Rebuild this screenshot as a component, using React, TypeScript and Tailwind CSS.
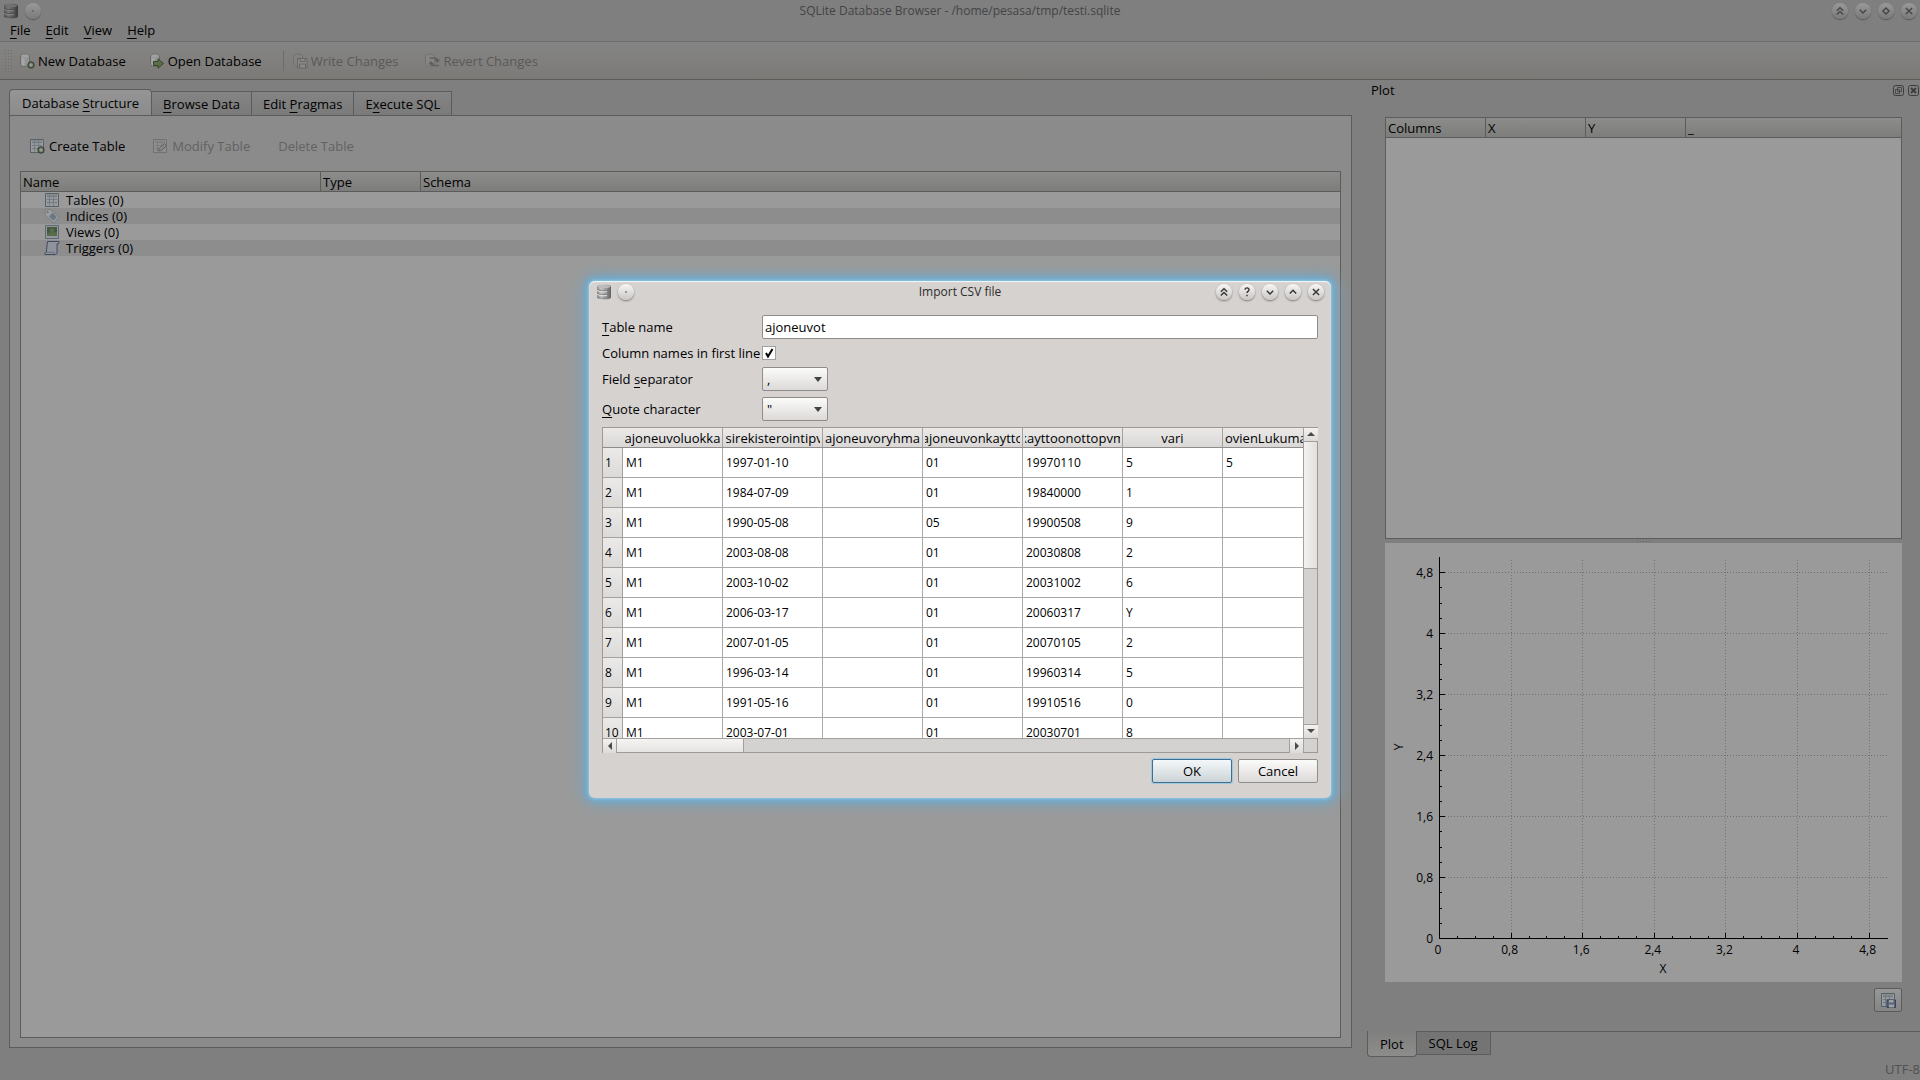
import React from "react";

type DiscKind = "dot" | "shade" | "help" | "down" | "up" | "diamond" | "close";

const discShapes: Record<DiscKind, React.ReactNode> = {
  dot: <circle cx="7.5" cy="7.5" r="0.7" fill="currentColor" stroke="none" />,
  shade: <path d="M4.5 7.2 7.5 4.4l3 2.8M4.5 10.8 7.5 8l3 2.8" />,
  help: <path d="M5.6 5.4c.2-2.4 4-2.2 3.8 0-.1 1.5-1.9 1.5-1.9 3M7.5 10v1.4" />,
  down: <path d="m4.5 6.3 3 3 3-3" />,
  up: <path d="m4.5 8.8 3-3 3 3" />,
  diamond: <path d="M7.5 4.6 10.4 7.5 7.5 10.4 4.6 7.5z" />,
  close: <path d="m4.6 4.6 5.8 5.8M10.4 4.6l-5.8 5.8" />,
};

const DiscButton: React.FC<{ kind: DiscKind; label: string; dim?: boolean }> = ({ kind, label, dim }) => (
  <button
    type="button"
    aria-label={label}
    className={
      dim
        ? "size-4 rounded-full bg-linear-to-b from-[#999] to-[#7a7a7a] text-[#454545] shadow-[0_1px_1px_#555]"
        : "size-4 rounded-full bg-linear-to-b from-[#f8f7f6] to-[#c9c6c4] text-[#333] shadow-[0_1px_2px_#777]"
    }
  >
    <svg viewBox="0 0 15 15" className="size-4" fill="none" stroke="currentColor" strokeWidth="1.3">
      {discShapes[kind]}
    </svg>
  </button>
);

const StackIcon: React.FC<{ dim?: boolean }> = ({ dim }) => (
  <svg viewBox="0 0 16 16" className={dim ? "size-4 brightness-60" : "size-4"}>
    <defs>
      <linearGradient id="stack" x1="0" x2="1">
        <stop offset="0" stopColor="#8c8c8c" />
        <stop offset=".3" stopColor="#c8c8c8" />
        <stop offset=".65" stopColor="#9a9a9a" />
        <stop offset="1" stopColor="#5c5c5c" />
      </linearGradient>
    </defs>
    <path d="M1 2.5C1 .2 15 .2 15 2.5v11c0 2.6-14 2.6-14 0z" fill="url(#stack)" />
    <ellipse cx="8" cy="2.6" rx="6.6" ry="1.5" fill="#bdbdbd" />
    <path d="M1 5.5c2 1.6 12 1.6 14 0M1 9.3c2 1.6 12 1.6 14 0M1 13c2 1.6 12 1.6 14 0" fill="none" stroke="#777" strokeWidth=".8" />
    <path d="M1 6.4c2 1.6 8 1.6 10 1.1M1 10.2c2 1.6 8 1.6 10 1.1" fill="none" stroke="#e2e2e2" strokeWidth=".9" />
  </svg>
);

const Cylinder = () => (
  <>
    <path d="M1.5 3c0-2.6 9-2.6 9 0v8.5c0 2.6-9 2.6-9 0z" fill="#949494" stroke="#6c6c6c" />
    <path d="M2.5 4.5v7c1 1 2 1.3 3 1.4V5.4z" fill="#a5a5a5" />
    <ellipse cx="6" cy="3" rx="3.8" ry="1.4" fill="#a0a0a0" />
  </>
);

const PlusBadge = () => (
  <>
    <circle cx="12" cy="12" r="3.2" fill="#5f6e56" stroke="#363e31" />
    <path d="M12 10.2v3.6M10.2 12h3.6" stroke="#a5a5a5" strokeWidth="1.2" />
  </>
);

const NewDbIcon = () => (
  <svg viewBox="0 0 16 16" className="size-4">
    <Cylinder />
    <PlusBadge />
  </svg>
);

const OpenDbIcon = () => (
  <svg viewBox="0 0 16 16" className="size-4">
    <Cylinder />
    <path d="M4.5 8.5H9V5.8l5.5 4.7L9 15.2v-2.7H4.500z" fill="#58704a" stroke="#35452b" />
  </svg>
);

const WriteIcon = () => (
  <svg viewBox="0 0 16 16" className="size-4" fill="none" stroke="#666">
    <path d="M5 13c-2 0-3.5-.6-3.500-1.500V3c0-2.600 9-2.600 9 0v2" fill="#838281" stroke="#717171" />
    <path d="M5.5 5.5H15V15H5.500z" fill="#8b8a89" />
    <path d="M8 5.500v3h5v-3M7.500 15v-4h6v4" />
  </svg>
);

const RevertIcon = () => (
  <svg viewBox="0 0 16 16" className="size-4" fill="none" stroke="#606060">
    <path d="M1.500 3c0-2.600 9-2.600 9 0v8.500c0 2.600-9 2.600-9 0z" fill="#878685" stroke="#717171" />
    <path d="M5.500 5h5c2 0 3 1 3 3M11 6.500 13.500 9 15.500 6.500M15 12.500H9.500c-1.500 0-2.500-.8-2.500-2.500M4.800 11.500 7 9l2.500 2.500" strokeWidth="1.500" />
  </svg>
);

const GridIcon: React.FC<{ faded?: boolean; children?: React.ReactNode }> = ({ faded, children }) => (
  <svg viewBox="0 0 16 16" className="size-4 shrink-0">
    <path d="M1.5 1.5h13v13h-13z" fill={faded ? "#8f8f8f" : "#989a9c"} stroke={faded ? "#727272" : "#56616c"} />
    <path d="M3 4.5h10M3 7.5h10M3 10.5h10M5.5 3v10.500M9.500 3v10.500" stroke={faded ? "#7c7c7c" : "#707b86"} />
    <path d="M3 3h10" stroke={faded ? "#808080" : "#737d77"} />
    {children}
  </svg>
);

const PencilBadge = () => (
  <path d="m6.500 13 .8-3 5.200-4.500 2 2L9.500 12.500z" fill="#868686" stroke="#656565" />
);

const TagIcon = () => (
  <svg viewBox="0 0 16 16" className="size-4 shrink-0">
    <path d="M.8 2.200 6 1.200l9.200 7.800-5.200 6.200L1.500 7.500z" fill="#9c9d9e" stroke="#7a7e82" />
    <circle cx="3.600" cy="4" r="1.100" fill="#6f7274" />
    <path d="m8.300 4.800 4.500 4-3.300 4L5 8.800z" fill="#6a7885" />
  </svg>
);

const ViewIcon = () => (
  <svg viewBox="0 0 16 16" className="size-4 shrink-0">
    <path d="M1.5 1.5h13v13h-13z" fill="#93969a" stroke="#5e6976" />
    <path d="M3 3h10v9H3z" fill="#46583f" />
    <path d="M3 10c3-3 6-1 10-2v4H3z" fill="#596c48" />
    <circle cx="8" cy="6.500" r="2.200" fill="#586b4c" />
  </svg>
);

const ScriptIcon = () => (
  <svg viewBox="0 0 16 16" className="size-4 shrink-0">
    <path
      d="M3.500 1.500H15c.5 1 .3 2-.7 2.300h-1.300v8.700c0 1.300-.6 2-1.500 2H1c-.5-1-.1-2.200 1.300-2.400z"
      fill="#8f949c"
      stroke="#414b5e"
    />
    <path d="M2.500 12.300H10l.8 1.800" fill="none" stroke="#667082" />
  </svg>
);

const menus = ["File", "Edit", "View", "Help"];

const Mnemonic: React.FC<{ text: string; at?: number }> = ({ text, at = 0 }) => (
  <>
    {text.slice(0, at)}
    <span className="underline underline-offset-3">{text[at]}</span>
    {text.slice(at + 1)}
  </>
);

const tabs = [
  { text: "Browse Data", at: 0 },
  { text: "Edit Pragmas", at: 5 },
  { text: "Execute SQL", at: 1 },
];

const tree = [
  { label: "Tables (0)", icon: <GridIcon /> },
  { label: "Indices (0)", icon: <TagIcon /> },
  { label: "Views (0)", icon: <ViewIcon /> },
  { label: "Triggers (0)", icon: <ScriptIcon /> },
];

const csvColumns = [
  { name: "ajoneuvoluokka", align: "justify-center" },
  { name: "ensirekisterointipvm", align: "justify-center" },
  { name: "ajoneuvoryhma", align: "justify-center" },
  { name: "ajoneuvonkaytto", align: "justify-center" },
  { name: "kayttoonottopvm", align: "justify-center" },
  { name: "vari", align: "justify-center" },
  { name: "ovienLukumaara", align: "justify-start" },
];

const csvRows = [
  ["M1", "1997-01-10", "", "01", "19970110", "5", "5"],
  ["M1", "1984-07-09", "", "01", "19840000", "1", ""],
  ["M1", "1990-05-08", "", "05", "19900508", "9", ""],
  ["M1", "2003-08-08", "", "01", "20030808", "2", ""],
  ["M1", "2003-10-02", "", "01", "20031002", "6", ""],
  ["M1", "2006-03-17", "", "01", "20060317", "Y", ""],
  ["M1", "2007-01-05", "", "01", "20070105", "2", ""],
  ["M1", "1996-03-14", "", "01", "19960314", "5", ""],
  ["M1", "1991-05-16", "", "01", "19910516", "0", ""],
  ["M1", "2003-07-01", "", "01", "20030701", "8", ""],
];

const headerCell = "h-5 border-b border-[#5c5c5c] px-0.5 text-left leading-4 font-normal";

const Toolbar = () => (
  <div className="flex h-[39px] items-center border-y border-t-[#6c6c6c] border-b-[#5c5c5c] bg-linear-to-b from-[#858585] to-[#7c7a77] pl-1">
    <span className="h-6 w-2 bg-[radial-gradient(#6c6c6c_1px,transparent_1px)] bg-size-[3px_3px]" />
    <button type="button" className="ml-[7px] flex items-center gap-[3px]">
      <NewDbIcon />
      New Database
    </button>
    <button type="button" className="ml-[23px] flex items-center gap-[3px]">
      <OpenDbIcon />
      Open Database
    </button>
    <span className="ml-[21px] h-5 border-l border-[#6c6c6c]" />
    <button type="button" disabled className="ml-2 flex items-center gap-[3px] text-[#595959]">
      <WriteIcon />
      Write Changes
    </button>
    <button type="button" disabled className="ml-[26px] flex items-center gap-[3px] text-[#595959]">
      <RevertIcon />
      Revert Changes
    </button>
  </div>
);

const StructurePanel = () => (
  <main className="flex min-w-0 flex-1 flex-col">
    <div className="flex items-end">
      <button
        type="button"
        className="-mb-px h-[27px] rounded-t-sm border border-b-0 border-[#5c5c5c] bg-linear-to-b from-[#959595] to-[#8b8b8b] px-3"
      >
        <Mnemonic text="Database Structure" at={9} />
      </button>
      {tabs.map((tab) => (
        <button
          key={tab.text}
          type="button"
          className="h-6 border border-b-0 border-l-0 border-[#5c5c5c] bg-linear-to-b from-[#848484] to-[#7a7a7a] px-[11px]"
        >
          <Mnemonic text={tab.text} at={tab.at} />
        </button>
      ))}
    </div>
    <div className="flex flex-1 flex-col border border-[#5c5c5c] bg-[#8b8b8b] px-2.5 pb-[9px]">
      <div className="flex h-[55px] items-center pt-1 pl-[9px]">
        <button type="button" className="flex items-center gap-1">
          <GridIcon>
            <PlusBadge />
          </GridIcon>
          Create Table
        </button>
        <button type="button" disabled className="ml-[27px] flex items-center gap-1 text-[#626262]">
          <GridIcon faded>
            <PencilBadge />
          </GridIcon>
          Modify Table
        </button>
        <button type="button" disabled className="ml-7 text-[#626262]">
          Delete Table
        </button>
      </div>
      <div className="flex-1 border border-[#5c5c5c] bg-[#9a9a9a]">
        <table className="w-full table-fixed border-separate border-spacing-0">
          <thead className="bg-linear-to-b from-[#8c8c8a] to-[#7c7c7b]">
            <tr>
              <th className={`${headerCell} w-[300px] border-r`}>Name</th>
              <th className={`${headerCell} w-[100px] border-r`}>Type</th>
              <th className={headerCell}>Schema</th>
            </tr>
          </thead>
          <tbody>
            {tree.map((node) => (
              <tr key={node.label} className="h-4 leading-4 even:bg-[#8d8d8d]">
                <td className="p-0" colSpan={3}>
                  <div className="flex h-4 items-center gap-1.5 pl-[23px]">
                    {node.icon}
                    {node.label}
                  </div>
                </td>
              </tr>
            ))}
          </tbody>
        </table>
      </div>
    </div>
  </main>
);

const majors = ["0", "0,8", "1,6", "2,4", "3,2", "4", "4,8"];
const minors = Array.from({ length: 25 }, (_, i) => i).filter((i) => i % 4 !== 0);
const originX = 54;
const originY = 395;
const stepX = 71.6;
const stepY = 61;

const PlotChart = () => (
  <svg viewBox="0 0 517 439" className="block h-auto w-full bg-[#9a9a9a]" fontSize="12" shapeRendering="crispEdges">
    <g stroke="#707070" strokeDasharray="1 2">
      {majors.slice(1).map((m, i) => (
        <React.Fragment key={m}>
          <path d={`M${originX + stepX * (i + 1) + 0.5} 17V${originY}`} />
          <path d={`M${originX} ${originY - stepY * (i + 1) + 0.5}H503`} />
        </React.Fragment>
      ))}
    </g>
    <g stroke="#000">
      <path d={`M${originX + 0.5} 14V${originY + 0.5}H503`} fill="none" />
      {majors.map((m, i) => (
        <path
          key={m}
          d={`M${originX + stepX * i + 0.5} ${originY}v-5M${originX} ${originY - stepY * i + 0.5}h6`}
        />
      ))}
      {minors.map((i) => (
        <path
          key={i}
          d={`M${originX + (stepX * i) / 4 + 0.5} ${originY}v-2M${originX} ${originY - (stepY * i) / 4 + 0.5}h3`}
        />
      ))}
    </g>
    {majors.map((m, i) => (
      <React.Fragment key={m}>
        <text x={originX + stepX * i - 1} y="411" textAnchor="middle">
          {m}
        </text>
        <text x="48" y={originY - stepY * i + 5} textAnchor="end">
          {m}
        </text>
      </React.Fragment>
    ))}
    <text x="278" y="430" textAnchor="middle">
      X
    </text>
    <text transform="translate(18 204) rotate(-90)" textAnchor="middle">
      Y
    </text>
  </svg>
);

const PlotDock = () => (
  <aside className="flex w-[553px] shrink-0 flex-col">
    <div className="flex h-5 items-center justify-between pr-px pl-1">
      <h2>Plot</h2>
      <div className="flex gap-1">
        <button type="button" aria-label="Float">
          <svg viewBox="0 0 11 11" className="size-[11px]" fill="none" stroke="#3c3c3c">
            <rect x=".5" y=".5" width="10" height="10" rx="2" />
            <path d="M4.500 2.500h4v4h-4zM2.500 4.500h4v4h-4z" strokeWidth=".8" />
          </svg>
        </button>
        <button type="button" aria-label="Close">
          <svg viewBox="0 0 11 11" className="size-[11px]" fill="none" stroke="#3c3c3c">
            <rect x=".5" y=".5" width="10" height="10" rx="2" />
            <path d="m3 3 5 5M8 3 3 8" strokeWidth="1.800" />
          </svg>
        </button>
      </div>
    </div>
    <div className="flex flex-1 flex-col px-[18px] pt-[17px]">
      <div className="flex-1 border border-[#5c5c5c] bg-[#9a9a9a]">
        <table className="w-full table-fixed border-separate border-spacing-0">
          <thead className="bg-linear-to-b from-[#8c8c8a] to-[#7c7c7b]">
            <tr>
              <th className={`${headerCell} w-[100px] border-r`}>Columns</th>
              <th className={`${headerCell} w-[100px] border-r`}>X</th>
              <th className={`${headerCell} w-[100px] border-r`}>Y</th>
              <th className={headerCell}>_</th>
            </tr>
          </thead>
        </table>
      </div>
      <div className="flex h-1 items-center justify-center">
        <span className="h-[3px] w-4 bg-[radial-gradient(#666_1px,transparent_1px)] bg-size-[3px_3px]" />
      </div>
      <PlotChart />
      <button
        type="button"
        aria-label="Save plot"
        className="mt-1.5 flex h-6 w-7 items-center justify-center self-end rounded-xs border border-[#5c5c5c] bg-linear-to-b from-[#979797] to-[#858585]"
      >
        <GridIcon>
          <path d="M7 8h8.500v7.500H7z" fill="#56647c" stroke="#39435a" />
          <path d="M9 8h4.500v2.500H9zM9 12.500h5v3H9z" fill="#a0a0a0" />
        </GridIcon>
      </button>
    </div>
    <div className="mt-[19px] flex h-[26px] items-start">
      <button type="button" className="h-[26px] rounded-b-sm border border-t-0 border-[#5c5c5c] bg-linear-to-b from-[#7f7f7f] to-[#8d8d8b] px-3">
        Plot
      </button>
      <button type="button" className="h-6 border border-l-0 border-[#5c5c5c] bg-[#747474] px-3">
        SQL Log
      </button>
      <span className="flex-1 border-t border-[#5c5c5c]" />
    </div>
  </aside>
);

const Triangle: React.FC<{ d: string }> = ({ d }) => (
  <svg viewBox="0 0 8 8" className="size-2" fill="#4a4a4a">
    <path d={d} />
  </svg>
);

const scrollButton =
  "flex size-3.5 shrink-0 items-center justify-center border-[#a3a09e] bg-linear-to-b from-[#f3f2f1] to-[#dddbda]";

const CsvPreview = () => (
  <div className="flex h-[326px] flex-col border border-[#9c9997] bg-white">
    <div className="flex min-h-0 flex-1">
      <div className="min-w-0 flex-1 overflow-hidden">
        <table className="w-[720px] table-fixed border-separate border-spacing-0">
          <thead className="bg-linear-to-b from-[#ebeae9] to-[#d9d7d6]">
            <tr>
              <th className="h-5 w-5 border-b border-[#8f8c8a] p-0" aria-label="Row" />
              {csvColumns.map(({ name, align }) => (
                <th
                  key={name}
                  className="h-5 w-[100px] border-r border-b border-[#a3a09e] border-b-[#8f8c8a] px-0.5 pt-0.5 leading-4 font-normal"
                >
                  <div className={`flex overflow-hidden whitespace-nowrap ${align}`}>{name}</div>
                </th>
              ))}
            </tr>
          </thead>
          <tbody className="text-xs">
            {csvRows.map((row, i) => (
              <tr key={row[4]}>
                <th className="h-[30px] border-r border-b border-[#a3a09e] bg-linear-to-b from-[#ebeae9] to-[#dcdad9] p-0 pt-0.5 pl-0.5 text-left font-normal">
                  {i + 1}
                </th>
                {row.map((cell, c) => (
                  <td key={csvColumns[c].name} className="h-[30px] border-r border-b border-[#a9a9a9] px-[3px] pt-0.5 pb-0">
                    {cell}
                  </td>
                ))}
              </tr>
            ))}
          </tbody>
        </table>
      </div>
      <div className="flex w-3.5 flex-col border-l border-[#a3a09e] bg-[#d4d2d1]">
        <span className={`${scrollButton} border-b`}>
          <Triangle d="M0 6 4 2l4 4z" />
        </span>
        <span className="h-[127px] border-b border-[#a3a09e] bg-linear-to-r from-[#f3f2f1] to-[#e2e0df]" />
        <span className="flex-1" />
        <span className={`${scrollButton} border-t`}>
          <Triangle d="M0 2h8L4 6z" />
        </span>
      </div>
    </div>
    <div className="flex h-3.5 border-t border-[#a3a09e] bg-[#d4d2d1]">
      <span className={`${scrollButton} border-r`}>
        <Triangle d="M6 0v8L2 4z" />
      </span>
      <span className="w-[127px] border-r border-[#a3a09e] bg-linear-to-b from-[#f5f4f3] to-[#e6e4e3]" />
      <span className="flex-1" />
      <span className={`${scrollButton} border-l`}>
        <Triangle d="M2 0v8l4-4z" />
      </span>
      <span className="w-3.5 border-l border-[#a3a09e]" />
    </div>
  </div>
);

const Combo: React.FC<{ id: string; value: string }> = ({ id, value }) => (
  <div className="relative w-[66px]">
    <select
      id={id}
      defaultValue={value}
      className="block h-6 w-full appearance-none rounded-xs border border-[#8f8c8a] bg-linear-to-b from-[#fbfbfa] to-[#dcdad9] pl-1"
    >
      <option>{value}</option>
    </select>
    <svg viewBox="0 0 8 5" className="pointer-events-none absolute top-2.5 right-1.5 h-[5px] w-2" fill="#444">
      <path d="M0 0h8L4 5z" />
    </svg>
  </div>
);

const ImportDialog = () => (
  <div
    role="dialog"
    aria-label="Import CSV file"
    className="w-[742px] rounded-md bg-[#d6d2d0] px-[13px] pb-[15px] shadow-[inset_0_1px_1px_#eefaff,0_0_3px_1px_#8fc6e4,0_0_6px_4px_#70abcd,0_0_14px_6px_#7aa3bb]"
  >
    <header className="-mx-1.5 flex h-[22px] items-center gap-1.5">
      <div className="flex flex-1 items-center gap-1.5">
        <StackIcon />
        <DiscButton kind="dot" label="Menu" />
      </div>
      <h1 className="text-xs text-[#2c2c2c]">Import CSV file</h1>
      <div className="flex flex-1 justify-end gap-[7px]">
        <DiscButton kind="shade" label="Shade" />
        <DiscButton kind="help" label="Help" />
        <DiscButton kind="down" label="Minimize" />
        <DiscButton kind="up" label="Maximize" />
        <DiscButton kind="close" label="Close" />
      </div>
    </header>
    <form className="flex flex-col gap-1.5 pt-3">
      <div className="flex items-center">
        <label htmlFor="tableName" className="w-40">
          <Mnemonic text="Table name" />
        </label>
        <input
          id="tableName"
          defaultValue="ajoneuvot"
          className="h-6 min-w-0 flex-1 rounded-xs border border-[#8f8c8a] bg-white px-0.5"
        />
      </div>
      <div className="flex h-4 items-center">
        <label htmlFor="header" className="w-40">
          Column names in first line
        </label>
        <div className="relative size-3.5">
          <input
            id="header"
            type="checkbox"
            defaultChecked
            className="block size-3.5 appearance-none border border-[#a3a09e] bg-white"
          />
          <svg viewBox="0 0 14 14" className="pointer-events-none absolute inset-0 size-3.5" fill="none" stroke="#000" strokeWidth="2">
            <path d="m4 7 2 3.500L10.500 3" />
          </svg>
        </div>
      </div>
      <div className="flex items-center">
        <label htmlFor="separator" className="w-40">
          <Mnemonic text="Field separator" at={6} />
        </label>
        <Combo id="separator" value="," />
      </div>
      <div className="flex items-center">
        <label htmlFor="quote" className="w-40">
          <Mnemonic text="Quote character" />
        </label>
        <Combo id="quote" value={'"'} />
      </div>
      <CsvPreview />
      <div className="flex justify-end gap-1.5">
        <button
          type="button"
          className="h-6 w-20 rounded-xs border border-[#3f6f90] bg-linear-to-b from-[#f4f8fa] to-[#ccd3d6] shadow-[0_0_1px_1px_#9cc6de]"
        >
          OK
        </button>
        <button
          type="button"
          className="h-6 w-20 rounded-xs border border-[#8f8c8a] bg-linear-to-b from-[#fbfbfa] to-[#dcdad9]"
        >
          Cancel
        </button>
      </div>
    </form>
  </div>
);

export default function App() {
  return (
    <div className="relative flex min-h-screen flex-col bg-[#7f7f7f] font-['Open_Sans',sans-serif] text-[13px] leading-5 text-black">
      <header className="flex h-[21px] items-center justify-between px-[3px]">
        <div className="flex flex-1 items-center gap-1.5">
          <StackIcon dim />
          <DiscButton kind="dot" label="Menu" dim />
        </div>
        <div className="text-xs text-[#444]">SQLite Database Browser - /home/pesasa/tmp/testi.sqlite</div>
        <div className="flex flex-1 justify-end gap-[7px]">
          <DiscButton kind="shade" label="Shade" dim />
          <DiscButton kind="down" label="Minimize" dim />
          <DiscButton kind="diamond" label="Restore" dim />
          <DiscButton kind="close" label="Close" dim />
        </div>
      </header>
      <nav className="flex h-5 items-center gap-[15px] pb-0.5 pl-2.5">
        {menus.map((m) => (
          <button key={m} type="button">
            <Mnemonic text={m} />
          </button>
        ))}
      </nav>
      <Toolbar />
      <div className="flex flex-1 gap-[15px] pl-[9px]">
        <div className="flex min-w-0 flex-1 pt-[9px] pb-[9px]">
          <StructurePanel />
        </div>
        <PlotDock />
      </div>
      <footer className="flex h-[23px] items-center justify-end text-[#505050]">UTF-8</footer>
      <div className="absolute inset-0 flex items-center justify-center pb-0.5">
        <ImportDialog />
      </div>
    </div>
  );
}
